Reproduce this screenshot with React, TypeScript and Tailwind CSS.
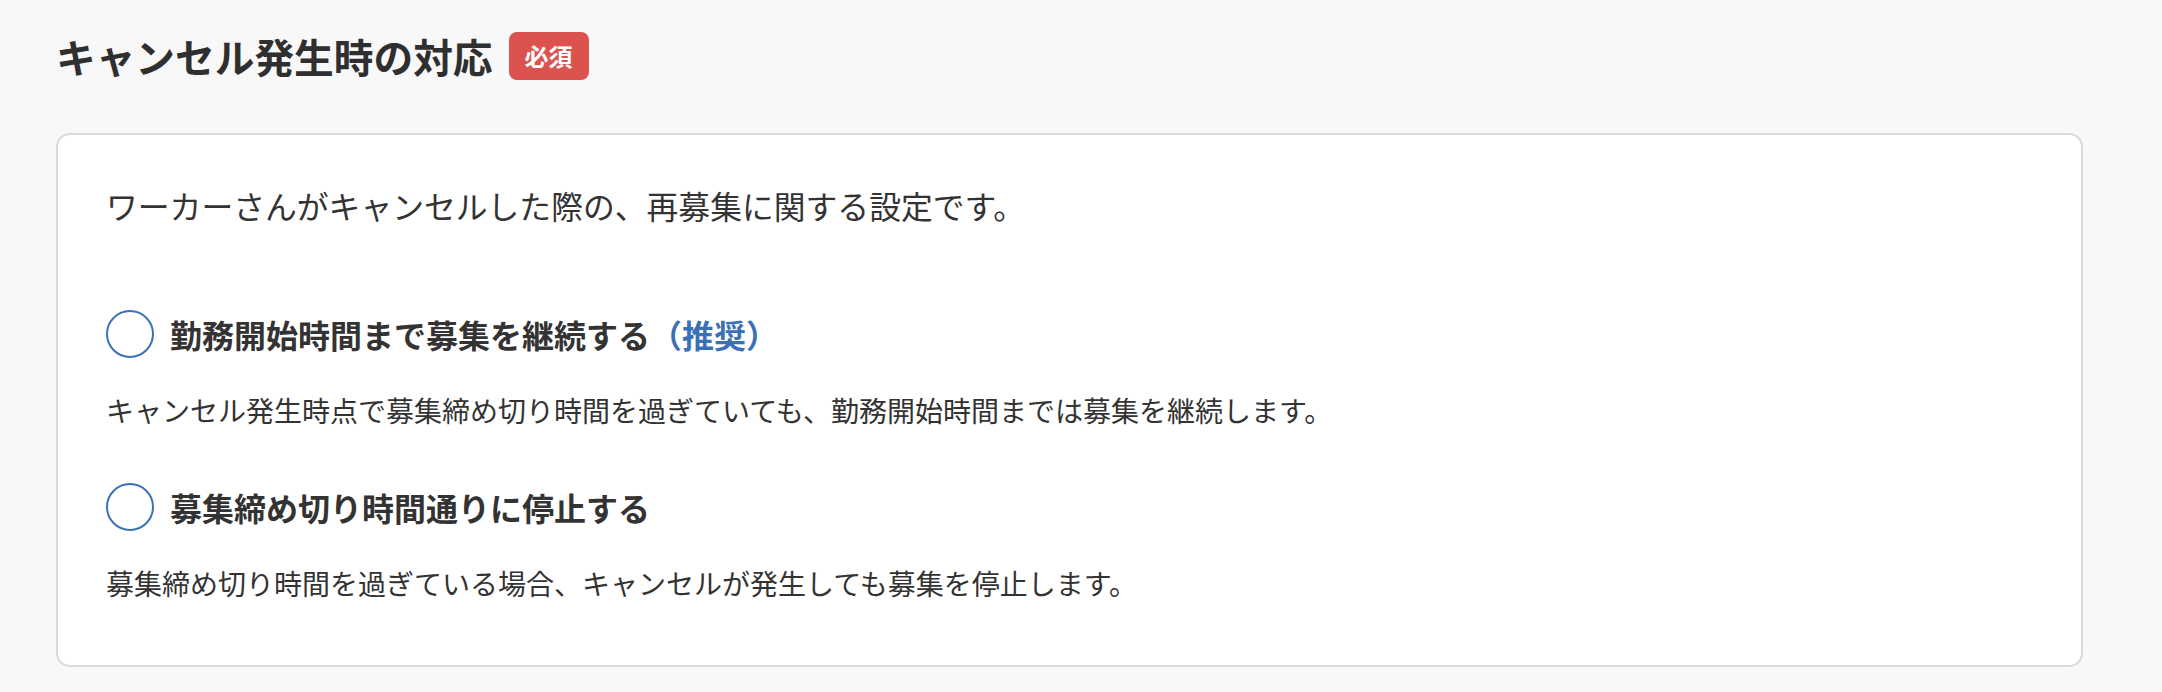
import React from "react";

const jp = "font-['Hiragino_Sans','Noto_Sans_CJK_JP',sans-serif]";

interface OptionProps {
  label: string;
  note?: string;
  description: string;
  className?: string;
}

function CancelOption({ label, note, description, className }: OptionProps) {
  return (
    <div className={className}>
      <label className="flex items-center gap-4 h-12 cursor-pointer">
        <span className="w-12 h-12 rounded-full border-2 border-[#3a72b9] bg-white shrink-0" />
        <span className="text-[32px] leading-[48px] font-bold text-[#333333]">
          {label}
          {note && <span className="text-[#3a70b6]">{note}</span>}
        </span>
      </label>
      <p className="mt-8 text-[28px] leading-[40px] text-[#333333]">{description}</p>
    </div>
  );
}

export default function App() {
  return (
    <div className={`min-h-[692px] bg-[#f8f8f8] pl-[56px] pr-[79px] pt-8 pb-6 ${jp}`}>
      <div className="flex items-center gap-4 h-12">
        <h2 className="text-[39.7px] leading-[48px] font-bold text-[#2f2f2f]">キャンセル発生時の対応</h2>
        <span className="h-12 px-4 rounded-lg bg-[#dc524f] text-white text-[24px] font-bold leading-[48px]">
          必須
        </span>
      </div>

      <div className="mt-[53px] bg-white border-2 border-[#dadada] rounded-[14px] px-12 pt-[50px] pb-[62px]">
        <p className="text-[31.8px] leading-[40px] text-[#333333]">
          ワーカーさんがキャンセルした際の、再募集に関する設定です。
        </p>

        <CancelOption
          className="mt-[85px]"
          label="勤務開始時間まで募集を継続する"
          note="（推奨）"
          description="キャンセル発生時点で募集締め切り時間を過ぎていても、勤務開始時間までは募集を継続します。"
        />
        <CancelOption
          className="mt-[53px]"
          label="募集締め切り時間通りに停止する"
          description="募集締め切り時間を過ぎている場合、キャンセルが発生しても募集を停止します。"
        />
      </div>
    </div>
  );
}
